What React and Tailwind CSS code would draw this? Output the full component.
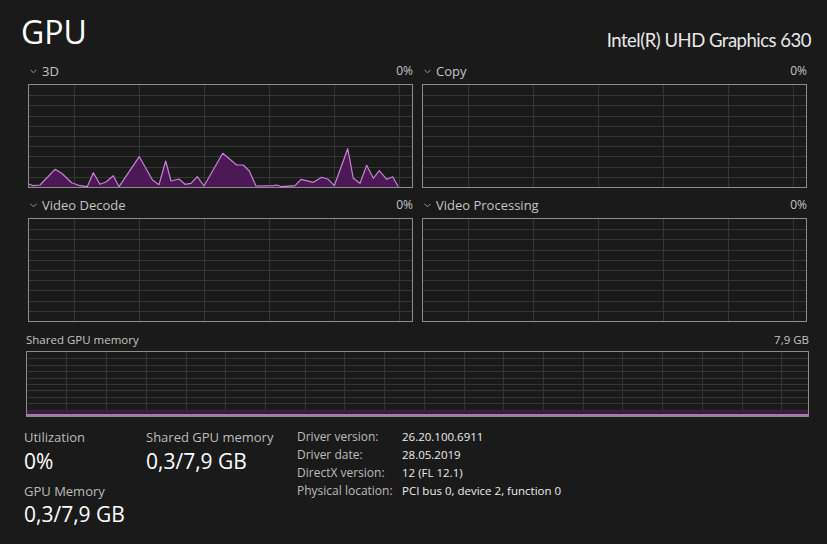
import React from "react";

const FONT = { fontFamily: '"Open Sans", "Noto Sans", sans-serif' };

const pts3d = [
  [0, 99], [4.3, 100.7], [11, 100], [26, 84.3], [32.7, 88.3], [42.7, 97.7], [51, 100.7],
  [58.3, 101.7], [64.3, 87.7], [71, 99.3], [77, 97], [84.3, 90.7], [90, 101.7],
  [110.3, 71.7], [123.5, 95], [130, 99.7], [136.7, 76], [142, 96], [150, 94], [156, 99.3],
  [162, 98.3], [168.3, 91.7], [175, 101], [193.7, 68.3], [207.7, 80], [214.3, 80],
  [220.3, 86], [227, 101], [244.3, 100.7], [247.7, 100], [252.7, 101.7], [266, 100.7],
  [272, 94.3], [284.3, 97.3], [292.7, 92.3], [299.3, 94.3], [305.3, 100.7], [318.7, 63.7],
  [324.3, 93.3], [331, 98.3], [337.7, 80.3], [344.3, 93.3], [350.3, 85.7], [357.7, 94.3],
  [363.7, 91.7], [369.3, 101.7],
];

function Grid({ w, h, vStart, vStep, hCount }) {
  const vs = [];
  for (let x = vStart; x < w; x += vStep) vs.push(x);
  const hs = [];
  for (let i = 1; i < hCount; i++) hs.push((h / hCount) * i);
  return (
    <g stroke="#363636" strokeWidth="1">
      {hs.map((y, i) => (
        <line key={"h" + i} x1="0" x2={w} y1={Math.round(y) + 0.5} y2={Math.round(y) + 0.5} />
      ))}
      {vs.map((x, i) => (
        <line key={"v" + i} x1={Math.round(x) + 0.5} x2={Math.round(x) + 0.5} y1="0" y2={h} />
      ))}
    </g>
  );
}

function Chevron() {
  return (
    <svg width="7" height="5" viewBox="0 0 7 5" className="shrink-0">
      <path d="M0.5 0.8 L3.5 3.8 L6.5 0.8" fill="none" stroke="#9a9a9a" strokeWidth="1" />
    </svg>
  );
}

function EngineChart({ label, data }) {
  const w = 383;
  const h = 102;
  const line = data ? data.map((p) => p.join(",")).join(" ") : "";
  const poly = data
    ? `${data[0][0]},${h} ` + line + ` ${data[data.length - 1][0]},${h}`
    : "";
  return (
    <div className="flex flex-col w-[385px]">
      <div className="h-[22px] flex items-start text-[13px] leading-[18px] text-[#c4c4c4]">
        <div className="flex items-center gap-[5px] pl-[2px]">
          <Chevron />
          <span>{label}</span>
        </div>
        <span className="ml-auto text-[12px] text-[#c4c4c4]">0%</span>
      </div>
      <div className="h-[104px] border border-[#8c8c8c] bg-[#1a1a1a]">
        <svg width={w} height={h} className="block">
          <Grid w={w} h={h} vStart={45} vStep={65} hCount={10} />
          {data && (
            <>
              <polygon points={poly} fill="#4d1856" />
              <polyline points={line} fill="none" stroke="#c486d0" strokeWidth="1.2" strokeLinejoin="round" />
            </>
          )}
        </svg>
      </div>
    </div>
  );
}

function MemoryChart() {
  const w = 781;
  const h = 64;
  return (
    <div className="h-[66px] w-[783px] border border-[#8c8c8c] bg-[#1a1a1a]">
      <svg width={w} height={h} className="block">
        <Grid w={w} h={h} vStart={39.4} vStep={39.72} hCount={10} />
        <rect x="0" y="58.5" width={w} height="4" fill="#3e1a42" />
        <line x1="0" x2={w} y1="63" y2="63" stroke="#c9a0d2" strokeWidth="1.3" />
      </svg>
    </div>
  );
}

export default function App() {
  return (
    <div className="w-[827px] h-[544px] bg-[#1a1a1a] overflow-hidden flex flex-col" style={FONT}>
      {/* header */}
      <div className="h-[62px] flex items-start">
        <div className="pl-[21px] pt-[12px] text-[32px] leading-[40px] text-white font-normal">GPU</div>
        <div
          className="ml-auto pr-[16px] pt-[27px] text-[18.5px] leading-[26px] tracking-[-0.5px] text-[#e8e8e8]"
          style={{ fontFamily: 'Lato, "Open Sans", sans-serif' }}
        >
          Intel(R) UHD Graphics 630
        </div>
      </div>

      {/* engine charts */}
      <div className="pl-[28px] grid grid-cols-[385px_385px] gap-x-[9px] gap-y-[8px]">
        <EngineChart label="3D" data={pts3d} />
        <EngineChart label="Copy" />
        <EngineChart label="Video Decode" />
        <EngineChart label="Video Processing" />
      </div>

      {/* shared memory */}
      <div className="pl-[26px] mt-[8px] w-[809px]">
        <div className="h-[21px] flex items-start pt-[2px] text-[11.5px] leading-[16px] text-[#c4c4c4]">
          <span>Shared GPU memory</span>
          <span className="ml-auto">7,9 GB</span>
        </div>
        <MemoryChart />
      </div>

      {/* stats */}
      <div className="flex items-start pt-[11px] pl-[24px]">
        <div className="w-[122px] flex flex-col">
          <div className="text-[13px] leading-[18px] text-[#bcbcbc]">Utilization</div>
          <div className="mt-[2px] text-[21px] leading-[26px] text-white">0%</div>
          <div className="mt-[8px] text-[13px] leading-[18px] text-[#bcbcbc]">GPU Memory</div>
          <div className="mt-[1px] text-[21px] leading-[26px] text-white">0,3/7,9 GB</div>
        </div>
        <div className="w-[151px] flex flex-col">
          <div className="text-[13px] leading-[18px] text-[#bcbcbc]">Shared GPU memory</div>
          <div className="mt-[2px] text-[21px] leading-[26px] text-white">0,3/7,9 GB</div>
        </div>
        <div className="grid grid-cols-[105px_auto] content-start text-[12px] leading-[18px]">
          <div className="text-[#bcbcbc]">Driver version:</div>
          <div className="text-[#ececec] text-[11.5px]">26.20.100.6911</div>
          <div className="text-[#bcbcbc]">Driver date:</div>
          <div className="text-[#ececec] text-[11.5px]">28.05.2019</div>
          <div className="text-[#bcbcbc]">DirectX version:</div>
          <div className="text-[#ececec] text-[11.5px]">12 (FL 12.1)</div>
          <div className="text-[#bcbcbc]">Physical location:</div>
          <div className="text-[#ececec] text-[11.5px]">PCI bus 0, device 2, function 0</div>
        </div>
      </div>
    </div>
  );
}
